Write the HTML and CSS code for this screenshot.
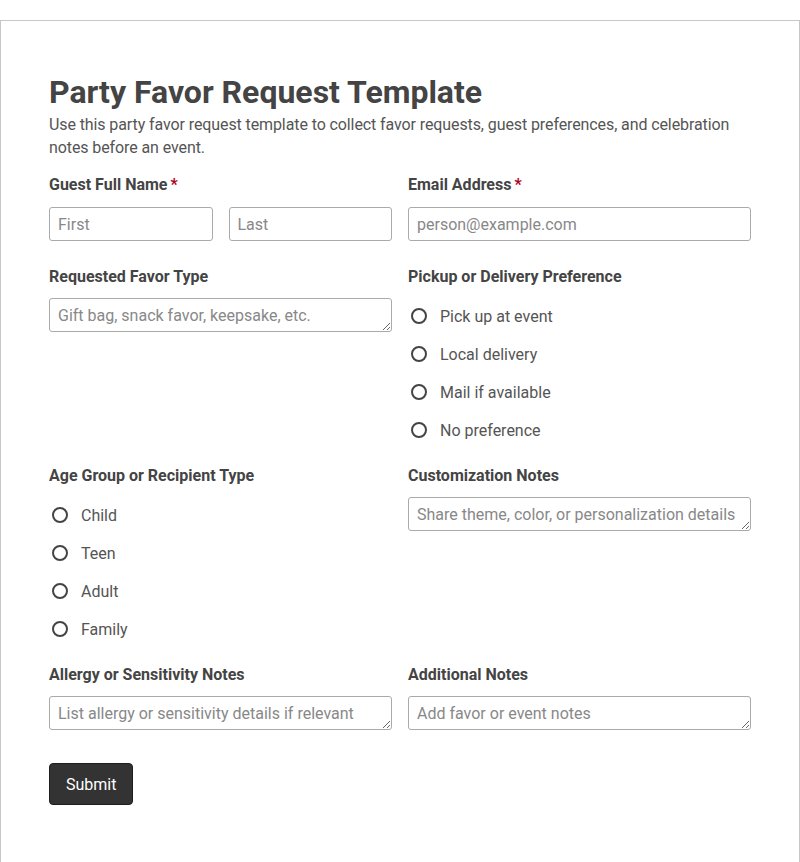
FILE: index.html
```html
<!DOCTYPE html>
<html lang="en">
<head>
<meta charset="utf-8">
<title>Party Favor Request Template</title>
<link rel="stylesheet" href="styles.css">
</head>
<body>
<form class="card">
  <h1 class="title">Party Favor Request Template</h1>
  <p class="desc">Use this party favor request template to collect favor requests, guest preferences, and celebration notes before an event.</p>
  <div class="grid">
    <div class="field">
      <label class="label">Guest Full Name<span class="req">*</span></label>
      <div class="name-row">
        <input class="input" type="text" placeholder="First">
        <input class="input" type="text" placeholder="Last">
      </div>
    </div>
    <div class="field">
      <label class="label">Email Address<span class="req">*</span></label>
      <input class="input" type="email" placeholder="person@example.com">
    </div>

    <div class="field">
      <label class="label">Requested Favor Type</label>
      <textarea class="input area" rows="1" placeholder="Gift bag, snack favor, keepsake, etc."></textarea>
    </div>
    <div class="field">
      <label class="label">Pickup or Delivery Preference</label>
      <div class="options">
        <label class="option"><input type="radio" name="pickup" class="radio"><span>Pick up at event</span></label>
        <label class="option"><input type="radio" name="pickup" class="radio"><span>Local delivery</span></label>
        <label class="option"><input type="radio" name="pickup" class="radio"><span>Mail if available</span></label>
        <label class="option"><input type="radio" name="pickup" class="radio"><span>No preference</span></label>
      </div>
    </div>

    <div class="field">
      <label class="label">Age Group or Recipient Type</label>
      <div class="options">
        <label class="option"><input type="radio" name="age" class="radio"><span>Child</span></label>
        <label class="option"><input type="radio" name="age" class="radio"><span>Teen</span></label>
        <label class="option"><input type="radio" name="age" class="radio"><span>Adult</span></label>
        <label class="option"><input type="radio" name="age" class="radio"><span>Family</span></label>
      </div>
    </div>
    <div class="field">
      <label class="label">Customization Notes</label>
      <textarea class="input area" rows="1" placeholder="Share theme, color, or personalization details"></textarea>
    </div>

    <div class="field">
      <label class="label">Allergy or Sensitivity Notes</label>
      <textarea class="input area" rows="1" placeholder="List allergy or sensitivity details if relevant"></textarea>
    </div>
    <div class="field">
      <label class="label">Additional Notes</label>
      <textarea class="input area" rows="1" placeholder="Add favor or event notes"></textarea>
    </div>
  </div>
  <button type="button" class="submit">Submit</button>
</form>
</body>
</html>
```

FILE: styles.css
```css
* { box-sizing: border-box; }

body {
  margin: 0;
  padding-top: 20px;
  background: #fff;
  font-family: Roboto, "Liberation Sans", Arial, sans-serif;
  color: #444;
}

.card {
  border: 1px solid #c8c8c8;
  border-bottom: none;
  padding: 52px 48px 56px;
  min-height: 842px;
  display: flex;
  flex-direction: column;
  align-items: flex-start;
}

.title {
  margin: 0 0 2px;
  font-size: 32px;
  line-height: 38px;
  font-weight: 700;
  color: #444;
}

.desc {
  margin: 0 0 16px;
  font-size: 16px;
  line-height: 23px;
  letter-spacing: -0.1px;
  color: #555;
}

.grid {
  width: 100%;
  display: grid;
  grid-template-columns: 1fr 1fr;
  column-gap: 16px;
  row-gap: 17px;
}

.field {
  display: flex;
  flex-direction: column;
  min-width: 0;
}

.label {
  font-size: 16px;
  line-height: 20px;
  font-weight: 700;
  color: #444;
  margin-bottom: 12px;
}

.req {
  color: #b00020;
  margin-left: 3px;
}

.name-row {
  display: grid;
  grid-template-columns: 1fr 1fr;
  gap: 16px;
  margin-bottom: 9px;
}

.input {
  width: 100%;
  height: 34px;
  border: 1px solid #aaa;
  border-radius: 3px;
  padding: 0 8px;
  font-family: inherit;
  font-size: 16px;
  color: #444;
  background: #fff;
  margin: 0;
}

.field > .input { margin-bottom: 9px; }
.name-row .input { margin: 0; }

.field > .area { margin-top: -1px; }

.area {
  display: block;
  resize: vertical;
  padding: 7px 8px 5px;
  line-height: 20px;
  overflow: hidden;
}

.input::placeholder { color: #888; opacity: 1; }

.options {
  display: flex;
  flex-direction: column;
  margin-top: -2px;
}

.option {
  display: flex;
  align-items: center;
  height: 38px;
  font-size: 16px;
  color: #555;
}

.radio {
  appearance: none;
  -webkit-appearance: none;
  width: 16px;
  height: 16px;
  border: 2px solid #444;
  border-radius: 50%;
  margin: 0 13px 0 3px;
  background: #fff;
  flex-shrink: 0;
}

.submit {
  margin-top: 24px;
  height: 42px;
  padding: 0 16px;
  background: #333;
  color: #fff;
  border: 1px solid #1e1e1e;
  border-radius: 4px;
  font-family: inherit;
  font-size: 16px;
}
```
